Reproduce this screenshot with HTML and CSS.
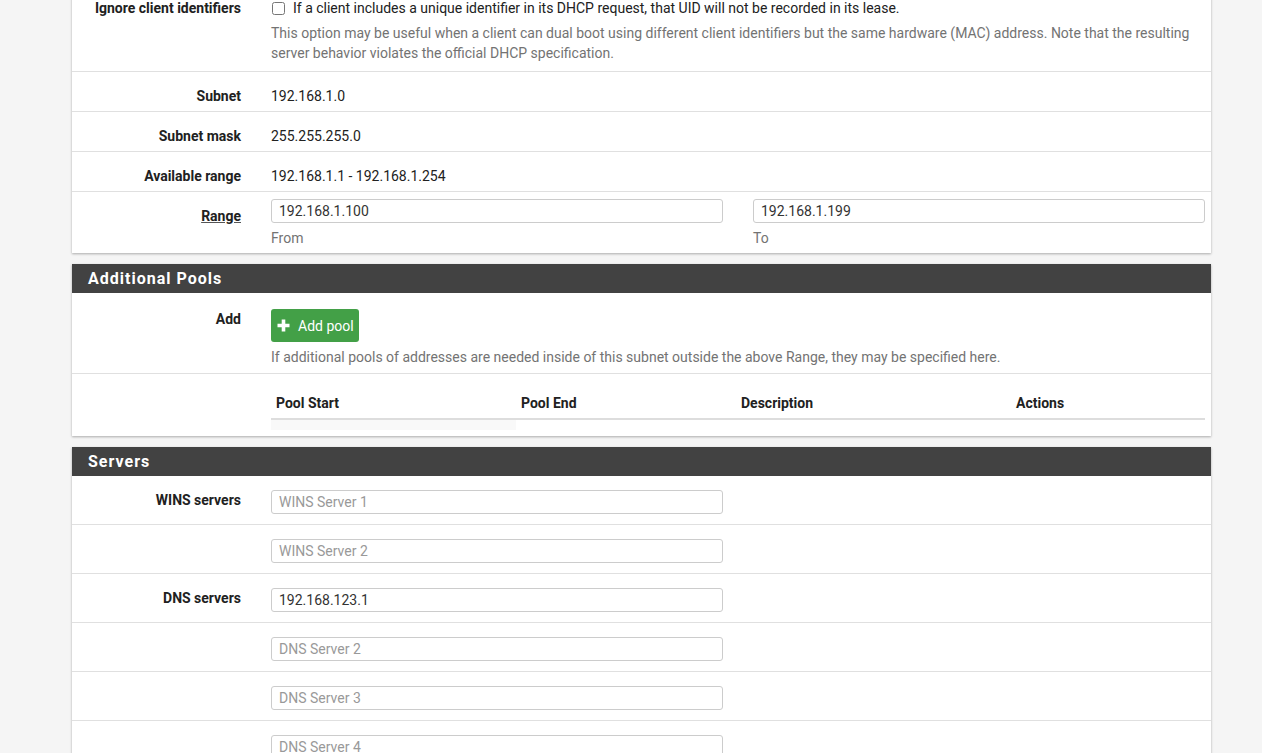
FILE: index.html
```html
<!DOCTYPE html>
<html lang="en">

<head>
    <meta charset="UTF-8">
    <meta name="viewport" content="width=device-width, initial-scale=1.0">
    <title>DHCP Server</title>
    <link rel="stylesheet" href="styles.css">
</head>

<body>
    <div class="page">
        <!-- General options (scrolled, heading is off screen) -->
        <div class="panel panel-scrolled">
            <div class="form-row row-check">
                <div class="form-label">Ignore client identifiers</div>
                <div class="form-field">
                    <label class="check-line"><input type="checkbox"> If a client includes a unique identifier in its DHCP request, that UID will not be recorded in its lease.</label>
                    <p class="help-text">This option may be useful when a client can dual boot using different client identifiers but the same hardware (MAC) address. Note that the resulting server behavior violates the official DHCP specification.</p>
                </div>
            </div>
            <div class="form-row">
                <div class="form-label">Subnet</div>
                <div class="form-field static-text">192.168.1.0</div>
            </div>
            <div class="form-row">
                <div class="form-label">Subnet mask</div>
                <div class="form-field static-text">255.255.255.0</div>
            </div>
            <div class="form-row">
                <div class="form-label">Available range</div>
                <div class="form-field static-text">192.168.1.1 - 192.168.1.254</div>
            </div>
            <div class="form-row row-range">
                <div class="form-label"><span class="label-link">Range</span></div>
                <div class="form-field field-split">
                    <div>
                        <input class="text-input" type="text" value="192.168.1.100">
                        <p class="help-text">From</p>
                    </div>
                    <div>
                        <input class="text-input" type="text" value="192.168.1.199">
                        <p class="help-text">To</p>
                    </div>
                </div>
            </div>
        </div>

        <!-- Additional pools -->
        <div class="panel">
            <div class="panel-heading">Additional Pools</div>
            <div class="form-row row-add">
                <div class="form-label">Add</div>
                <div class="form-field">
                    <button class="btn-success" type="button">
                        <svg width="13" height="13" viewBox="0 0 13 13">
                            <path d="M4.7 0.5h3.6v4.2h4.2v3.6H8.3v4.2H4.7V8.3H0.5V4.7h4.2z" fill="#fff" />
                        </svg>
                        Add pool
                    </button>
                    <p class="help-text">If additional pools of addresses are needed inside of this subnet outside the above Range, they may be specified here.</p>
                </div>
            </div>
            <div class="form-row row-table">
                <div class="form-label"></div>
                <div class="form-field">
                    <table class="pool-table">
                        <thead>
                            <tr>
                                <th class="col-start">Pool Start</th>
                                <th class="col-end">Pool End</th>
                                <th class="col-desc">Description</th>
                                <th class="col-actions">Actions</th>
                            </tr>
                        </thead>
                        <tbody>
                            <tr>
                                <td></td>
                            </tr>
                        </tbody>
                    </table>
                </div>
            </div>
        </div>

        <!-- Servers -->
        <div class="panel">
            <div class="panel-heading">Servers</div>
            <div class="form-row row-input">
                <div class="form-label">WINS servers</div>
                <div class="form-field"><input class="text-input" type="text" placeholder="WINS Server 1"></div>
            </div>
            <div class="form-row row-input">
                <div class="form-label"></div>
                <div class="form-field"><input class="text-input" type="text" placeholder="WINS Server 2"></div>
            </div>
            <div class="form-row row-input">
                <div class="form-label">DNS servers</div>
                <div class="form-field"><input class="text-input" type="text" value="192.168.123.1"></div>
            </div>
            <div class="form-row row-input">
                <div class="form-label"></div>
                <div class="form-field"><input class="text-input" type="text" placeholder="DNS Server 2"></div>
            </div>
            <div class="form-row row-input">
                <div class="form-label"></div>
                <div class="form-field"><input class="text-input" type="text" placeholder="DNS Server 3"></div>
            </div>
            <div class="form-row row-input">
                <div class="form-label"></div>
                <div class="form-field"><input class="text-input" type="text" placeholder="DNS Server 4"></div>
            </div>
        </div>
    </div>
</body>

</html>
```

FILE: styles.css
```css
/* Reset some default styling */
* {
    margin: 0;
    padding: 0;
    box-sizing: border-box;
}

body {
    font-family: Roboto, 'Liberation Sans', sans-serif;
    font-size: 14px;
    line-height: 20px;
    color: #212121;
    background-color: #f5f5f5;
    overflow: hidden;
}

.page {
    padding: 0 51px 0 72px;
}

/* Panels */
.panel {
    width: 1139px;
    background-color: #fff;
    margin-bottom: 11px;
    box-shadow: 0 1px 3px rgba(0, 0, 0, 0.12), 0 1px 2px rgba(0, 0, 0, 0.2);
}

.panel-scrolled {
    margin-top: -16px;
}

.panel-heading {
    background-color: #424242;
    color: #fff;
    font-size: 16px;
    font-weight: bold;
    letter-spacing: 1px;
    line-height: 18px;
    padding: 6px 16px 5px;
}

/* Form rows */
.form-row {
    display: grid;
    grid-template-columns: 169px 934px;
    column-gap: 30px;
    padding: 14px 0 5px;
    border-bottom: 1px solid #e0e0e0;
}

.form-row:last-child {
    border-bottom: none;
}

.form-label {
    text-align: right;
    font-weight: bold;
}

.row-check {
    padding-bottom: 8px;
}

.row-add {
    padding: 16px 0 6px;
}

.row-input {
    padding-bottom: 10px;
}

.row-range .field-split {
    margin-top: -7px;
}

.row-table {
    padding-bottom: 6px;
}

.label-link {
    text-decoration: underline;
    text-decoration-color: #555;
}

.check-line {
    display: flex;
    align-items: center;
}

.check-line input {
    width: 13px;
    height: 13px;
    margin: 0 8px 0 1px;
}

.help-text {
    color: #737373;
    margin-top: 5px;
}

.field-split {
    display: grid;
    grid-template-columns: 452px 452px;
    column-gap: 30px;
}

/* Inputs */
.text-input {
    display: block;
    width: 452px;
    height: 24px;
    padding: 0 7px;
    font-family: Roboto, 'Liberation Sans', sans-serif;
    font-size: 14px;
    color: #333;
    border: 1px solid #ccc;
    border-radius: 3px;
    background: #fff;
}

.text-input::placeholder {
    color: #999;
}

/* Add pool button */
.btn-success {
    display: flex;
    align-items: center;
    gap: 8px;
    height: 33px;
    padding: 0 5px 0 6px;
    background-color: #43a047;
    color: #fff;
    border: none;
    border-radius: 3px;
    font-family: Roboto, 'Liberation Sans', sans-serif;
    font-size: 14px;
}

/* Pools table */
.pool-table {
    width: 934px;
    border-collapse: collapse;
}

.pool-table th {
    text-align: left;
    padding: 5px;
    border-bottom: 2px solid #ddd;
}

.pool-table td {
    height: 11px;
    padding: 0;
    background-color: #f9f9f9;
}

.col-start {
    width: 245px;
}

.col-end {
    width: 220px;
}

.col-desc {
    width: 275px;
}
```
